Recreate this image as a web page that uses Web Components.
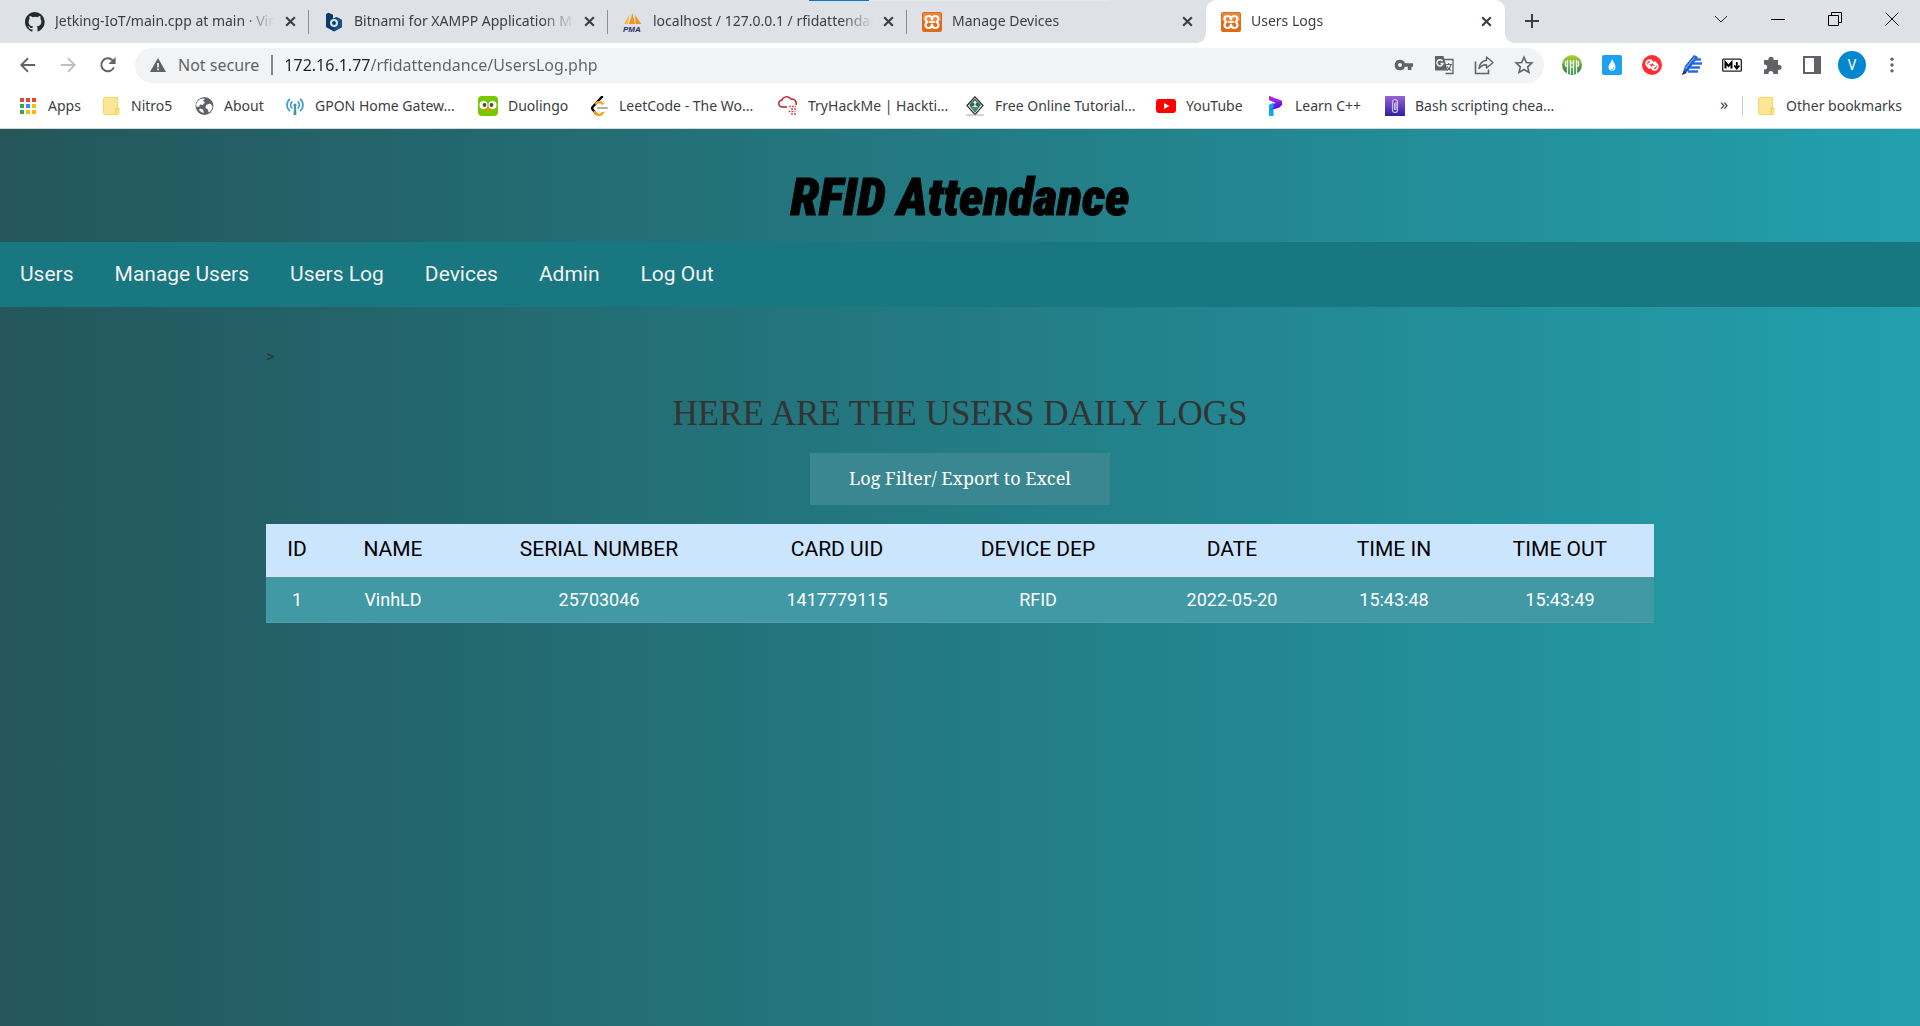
<!DOCTYPE html>
<html lang="en">
<head>
<meta charset="utf-8">
<title>Users Logs</title>
<style>
html,body{height:100%}
body{margin:0;font-family:"Noto Sans","Open Sans",sans-serif;font-size:14px;color:#3c4043;display:flex;flex-direction:column}
browser-window{flex:1}
</style>
</head>
<body>
<browser-window>
  <tab-strip slot="tabs">
    <browser-tab icon="github">Jetking-IoT/main.cpp at main · VinhLD</browser-tab>
    <browser-tab icon="bitnami">Bitnami for XAMPP Application Manager</browser-tab>
    <browser-tab icon="pma">localhost / 127.0.0.1 / rfidattendance</browser-tab>
    <browser-tab icon="xampp">Manage Devices</browser-tab>
    <browser-tab icon="xampp" active>Users Logs</browser-tab>
  </tab-strip>
  <address-bar slot="toolbar"></address-bar>
  <bookmark-bar slot="bookmarks">
    <bookmark-link icon="apps">Apps</bookmark-link>
    <bookmark-link icon="folder">Nitro5</bookmark-link>
    <bookmark-link icon="globe">About</bookmark-link>
    <bookmark-link icon="gpon">GPON Home Gatew...</bookmark-link>
    <bookmark-link icon="duo">Duolingo</bookmark-link>
    <bookmark-link icon="leet">LeetCode - The Wo...</bookmark-link>
    <bookmark-link icon="thm">TryHackMe | Hackti...</bookmark-link>
    <bookmark-link icon="tutorial">Free Online Tutorial...</bookmark-link>
    <bookmark-link icon="youtube">YouTube</bookmark-link>
    <bookmark-link icon="learn">Learn C++</bookmark-link>
    <bookmark-link icon="bash">Bash scripting chea...</bookmark-link>
    <bookmark-link slot="other" icon="folder">Other bookmarks</bookmark-link>
  </bookmark-bar>
  <attendance-page>
    <site-header slot="header">RFID Attendance</site-header>
    <site-nav slot="header"></site-nav>
    <user-logs></user-logs>
  </attendance-page>
</browser-window>

<script>
const ICONS = {
github:['0 0 16 16','<path fill="#24292f" d="M8 0C3.6 0 0 3.6 0 8c0 3.5 2.3 6.5 5.5 7.6.4.1.5-.2.5-.4v-1.400c-2.200.5-2.700-1-2.700-1-.4-.9-.9-1.200-.9-1.200-.7-.5.1-.5.1-.5.8.1 1.200.8 1.200.8.7 1.300 1.900.9 2.300.7.1-.5.3-.9.5-1.100-1.800-.2-3.600-.9-3.600-4 0-.9.3-1.600.8-2.100-.1-.2-.4-1 .1-2.100 0 0 .7-.2 2.200.8a7.500 7.500 0 0 1 4 0c1.500-1 2.200-.8 2.200-.8.4 1.100.2 1.900.1 2.100.5.600.8 1.300.8 2.100 0 3.100-1.900 3.700-3.700 3.900.3.300.6.800.6 1.500v2.200c0 .2.100.5.500.4A8 8 0 0 0 8 0z"/>'],
bitnami:['0 0 20 20','<path fill="#0b3a66" d="M4.500.8l4.500 2v4l3-1.500 6 2.700v7L10 19.500 2 15V2z"/><path fill="#15508c" d="M9 7l4-2 5 3v7l-8 4.500z"/><circle cx="10" cy="11" r="4" fill="#dee1e6"/><circle cx="10" cy="11" r="1.900" fill="#0b3a66"/>'],
pma:['0 0 20 20','<path fill="#f7941d" d="M6 12L9.500 1 12 12zM12.500 12L12 3l6.500 9z"/><path fill="#fbb450" d="M1 12L6 3 5 12z"/><text x="0" y="19.500" font-family="Liberation Sans" font-size="8" font-weight="bold" font-style="italic" fill="#2b2e63">PMA</text>'],
xampp:['0 0 20 20','<rect width="20" height="20" rx="2" fill="#e06a17"/><rect x="1" y="1" width="18" height="8" rx="1" fill="#f08538"/><g fill="none" stroke="#fff" stroke-width="2.200" stroke-linecap="round" stroke-linejoin="round"><path d="M10 7.500C10 4.500 8.500 4 6.500 4S3.500 5.500 3.500 7 4.500 9.500 5.500 10C4.300 10.500 3.500 11.500 3.500 13s1.200 3 3 3S10 15 10 12.500C10 15 11.700 16 13.500 16s3-1.500 3-3-.8-2.500-2-3c1.200-.5 2-1.500 2-3s-1.200-3-3-3S10 4.500 10 7.500z"/><path d="M8 10h4"/></g>'],
close:['0 0 12 12','<path d="M2 2l8 8M10 2l-8 8" stroke="#3c4043" stroke-width="2"/>'],
plus:['0 0 16 16','<path d="M8 1v14M1 8h14" stroke="#3c4043" stroke-width="2"/>'],
chev:['0 0 14 14','<path d="M1 4l6 6 6-6" fill="none" stroke="#222" stroke-width="1"/>'],
min:['0 0 14 14','<path d="M0 7.500h14" stroke="#000"/>'],
restore:['0 0 14 14','<path d="M.5 3.500h10v10h-10zM3.500 3.500v-3h10v10h-3" fill="none" stroke="#000"/>'],
wclose:['0 0 14 14','<path d="M.5.5l13 13M13.500.5l-13 13" stroke="#111"/>'],
back:['0 0 20 20','<path d="M18 10H3M10 2.500L2.500 10l7.500 7.500" fill="none" stroke="#5f6368" stroke-width="2"/>'],
fwd:['0 0 20 20','<path d="M2 10h15M10 2.500l7.500 7.500-7.500 7.500" fill="none" stroke="#bdc1c6" stroke-width="2"/>'],
reload:['0 0 20 20','<path d="M16.500 12.500A7.200 7.200 0 1 1 15 4.800L17 7" fill="none" stroke="#5f6368" stroke-width="2.200"/><path d="M18.500 1v8h-8z" fill="#5f6368"/>'],
warn:['0 0 16 16','<path d="M8 1l8 14H0z" fill="#5f6368"/><path d="M7.200 6h1.600v4.500H7.200zM7.200 11.600h1.600v1.600H7.200z" fill="#fff"/>'],
key:['0 0 20 20','<path fill="#5f6368" fill-rule="evenodd" d="M6 4.700a5.300 5.300 0 0 1 5 3.600h8v3.500h-1.600V15h-3.600v-3.200H11A5.300 5.300 0 1 1 6 4.700zM6 8a2 2 0 1 0 0 4 2 2 0 0 0 0-4z"/>'],
translate:['0 0 20 20','<path d="M10 4.500h9v14h-7.500" fill="none" stroke="#5f6368" stroke-width="1.300"/><path d="M1 1h8.500l4 14.500H1z" fill="#5f6368"/><path d="M8.500 6A3.100 3.100 0 1 0 9 8.500H6.500" fill="none" stroke="#fff" stroke-width="1.400"/><path d="M11.500 9.500H18M14.700 8v1.500M17 9.500c-.5 2.500-2 4.500-4 6M13 11.500c1 1.800 2 3 4 4" fill="none" stroke="#5f6368" stroke-width="1.200"/>'],
share:['0 0 20 20','<path d="M1.500 6.500v12h13v-4" fill="none" stroke="#5f6368" stroke-width="1.600"/><path d="M12.500 2l6.500 5.500-6.500 5.500v-3.300c-3.500-.2-5.500 1-7.500 3.800.5-4.500 3-7.500 7.500-8.200z" fill="none" stroke="#5f6368" stroke-width="1.400" stroke-linejoin="round"/>'],
star:['0 0 20 20','<path d="M10 2.300l2.300 5.200 5.600.5-4.200 3.800 1.200 5.600L10 14.500l-4.900 2.900 1.200-5.600L2.100 8l5.600-.5z" fill="none" stroke="#5f6368" stroke-width="1.600"/>'],
forks:['0 0 20 20','<defs><linearGradient id="g" x2="0" y2="1"><stop offset="0" stop-color="#b5d334"/><stop offset="1" stop-color="#0b7a3b"/></linearGradient></defs><circle cx="10" cy="10" r="10" fill="url(#g)"/><path d="M5.500 5v14M8.500 5v14.500M11.500 5v14.500M14.500 5v14" fill="none" stroke="#fff" stroke-width="1.400"/><path d="M3.500 6v5h2M16.500 6v5h-2M8.500 8h3M8.500 12h3" fill="none" stroke="#fff" stroke-width="1.200"/>'],
drop:['0 0 20 20','<rect width="20" height="20" rx="2" fill="#1da1f2"/><path d="M10 4c1 3 3.500 5 3.500 8a3.500 3.700 0 0 1-7 0C6.500 9.500 9 8 10 4z" fill="#fff"/><path d="M9 14.500c2 .3 3-.8 3-2.500" fill="none" stroke="#1da1f2" stroke-width=".8"/>'],
redsync:['0 0 20 20','<circle cx="10" cy="10" r="10" fill="#ff2d34"/><path d="M7.500 13.500L5 10.500a3.300 3.300 0 0 1 4-5l5 5M12.500 6.500l2.500 3a3.300 3.300 0 0 1-4 5l-5-5" fill="none" stroke="#fff" stroke-width="1.900"/><path d="M10 4.200v5H5.500zM10 15.800v-5h4.500z" fill="#fff"/>'],
pencil:['0 0 20 20','<path d="M0 20L3 11 12 0l4 2L6 16z" fill="#1c58c7"/><path d="M3 14L13 2" stroke="#5aa0f2" stroke-width="1.500"/><path d="M12 4.500h7M11 8.500h9M8 12.500h10M6 16.500h10" stroke="#2a6de0" stroke-width="2.400"/><path d="M0 20l2-4 3 2z" fill="#12326e"/>'],
md:['0 0 20 20','<rect x=".7" y="4.200" width="18.600" height="12" rx="1" fill="#fff" stroke="#222" stroke-width="1.300"/><path d="M3.500 13.500v-6l3 3.500 3-3.500v6" fill="none" stroke="#000" stroke-width="2"/><path d="M14.800 7v5M12.300 10.500l2.500 3 2.500-3" fill="none" stroke="#000" stroke-width="1.800"/>'],
puzzle:['0 0 20 20','<path fill="#5f6368" d="M2 5h4.500a2.600 2.600 0 1 1 5 0H16v5a2.600 2.600 0 1 1 0 4.800V19h-4.800a2.400 2.400 0 1 0-4.600 0H2v-4.500a2.500 2.500 0 1 0 0-4.800z"/>'],
panel:['0 0 20 20','<rect x="2" y="2" width="16" height="16" fill="none" stroke="#5f6368" stroke-width="2"/><path d="M12 2h6v16h-6z" fill="#5f6368"/>'],
dots:['0 0 20 20','<g fill="#5f6368"><circle cx="10" cy="3.500" r="1.900"/><circle cx="10" cy="10" r="1.900"/><circle cx="10" cy="16.500" r="1.900"/></g>'],
apps:['0 0 20 20','<path fill="#ea4335" d="M2 2h4v4H2zM8 2h4v4H8zM14 2h4v4h-4z"/><path fill="#34a853" d="M2 8h4v4H2zM2 14h4v4H2z"/><path fill="#4285f4" d="M8 8h4v4H8z"/><path fill="#fbbc04" d="M14 8h4v4h-4zM8 14h4v4H8zM14 14h4v4h-4z"/>'],
folder:['0 0 20 20','<path d="M3.500 1.500h13v11h1.500v4.500a1.500 1.500 0 0 1-1.500 1.500h-13a1.500 1.500 0 0 1-1-1.500V2.500z" fill="#ffe694" stroke="#f5d565"/><path d="M15 18v-4.500a1 1 0 0 1 3 0" fill="none" stroke="#e8c44f"/>'],
globe:['0 0 20 20','<circle cx="10.500" cy="10" r="9" fill="#5f6368"/><path d="M4 5c2-2.500 5-3 7-2.300L9 5l2 1.500L8.500 9 6 8.500 5 11l-2.800-.5C2 8.500 2.800 6.500 4 5zM12 9l4-1.500 2.500 2.500c0 3-1.700 5.500-4 6.500l-.5-3-2.500-1.500zM6 12.500l3 1 1 3.500c-2-.3-4-1.500-5-3z" fill="#fff"/>'],
gpon:['0 0 20 20','<g fill="none" stroke="#3da2cf" stroke-width="1.700"><path d="M5 3C1 6 1 12 5 15M7.300 5.500c-2.300 2-2.300 5 0 7M15 3c4 3 4 9 0 12M12.700 5.500c2.300 2 2.300 5 0 7"/></g><path d="M10 7.500a1.700 1.700 0 0 1 1 3L11.500 19h-3L9 10.500a1.700 1.700 0 0 1 1-3z" fill="#4f8fae"/>'],
duo:['0 0 20 20','<rect width="20" height="20" rx="4" fill="#78c800"/><circle cx="5.500" cy="9" r="4" fill="#fff"/><circle cx="14.500" cy="9" r="4" fill="#fff"/><circle cx="6.500" cy="9" r="1.900" fill="#4b4b4b"/><circle cx="13.500" cy="9" r="1.900" fill="#4b4b4b"/><path d="M7.500 12.500L10 11l2.500 1.500L10 16z" fill="#ff8a00"/>'],
leet:['0 0 20 20','<path d="M13 .8L4 10.500c-1 1-1 2.500 0 3.500l3.500 4" fill="none" stroke="#000" stroke-width="2.400" stroke-linecap="round"/><path d="M7 7.500c2-2 4.500-2 6.500.2M5.500 16l3 2.500c2 .8 4 .2 5.500-1.800" fill="none" stroke="#ffa116" stroke-width="2.400" stroke-linecap="round"/><path d="M9 12h9" stroke="#b3b3b3" stroke-width="2.200" stroke-linecap="round"/>'],
thm:['0 0 20 20','<path d="M9 11H4.500a3.500 3.500 0 0 1-.5-7c1-3.500 6.500-4.500 9-1 3.500-.5 6 2.500 5 6" fill="none" stroke="#c11d2b" stroke-width="1.500"/><g fill="none" stroke="#c4545c" stroke-width="1.500" stroke-dasharray="2 1"><path d="M11 10.500h7M13 13h6M10.500 15.500h7M13 18h6"/></g>'],
tutorial:['0 0 20 20','<path d="M10 .8l8 8.800-8 9-8-9z" fill="#eef3ee" stroke="#222" stroke-width="1.200"/><path d="M10 3.500L5 9l5 6.500L15 9z" fill="none" stroke="#466" stroke-width="1.400"/><circle cx="7.500" cy="8.500" r="2" fill="#2f6b4b"/><circle cx="12.500" cy="8.500" r="2" fill="#2f6b4b"/><path d="M5.500 11h9L10 15.500z" fill="#4b8c68"/><path d="M1 19h18" stroke="#aaa"/>'],
youtube:['0 0 20 20','<rect y="3" width="20" height="14" rx="3" fill="#f00"/><path d="M8 7l5.500 3L8 13z" fill="#fff"/>'],
learn:['0 0 20 20','<path d="M4 0l13 5v4l-4 3-9 2V9l7-2-7-3z" fill="#6a1be0"/><path d="M4 0l13 5-3 1L4 4z" fill="#b41cf0"/><path d="M4 9l4.500-2.500V20H4z" fill="#0da7ff"/><path d="M4 14l13-6-2.500 3.500z" fill="#4a1ad8"/>'],
bash:['0 0 20 20','<defs><linearGradient id="b" x2="0" y2="1"><stop offset="0" stop-color="#9a63d4"/><stop offset="1" stop-color="#2d1fa0"/></linearGradient></defs><rect width="20" height="20" fill="url(#b)"/><path d="M7.500 6a2.500 2.500 0 0 1 5 0v8a2.500 2.500 0 0 1-5 0zM9.500 7v6a.8.8 0 0 0 1.500 0V6" fill="none" stroke="#c9bdf0" stroke-width="1.200"/>']
};

class Base extends HTMLElement {
  constructor() {
    super();
    this.attachShadow({mode: 'open'});
  }
  connectedCallback() { this.shadowRoot.innerHTML = this.view(); }
}
const RESET = `:host,*{box-sizing:border-box}button,input{font:inherit;color:inherit;border:0;background:none;padding:0;margin:0}a{color:inherit;text-decoration:none}button{display:grid;place-items:center}`;

customElements.define('app-icon', class extends Base {
  view() {
    const [box, body] = ICONS[this.getAttribute('name')];
    const size = this.getAttribute('size') || 20;
    return `<style>:host{display:block;flex:none;line-height:0}</style><svg aria-hidden="true" width="${size}" height="${size}" viewBox="${box}">${body}</svg>`;
  }
});

customElements.define('browser-window', class extends Base {
  view() { return `<style>
    :host{display:flex;flex-direction:column}
    ::slotted(attendance-page){flex:1}
    </style><slot name="tabs"></slot><slot name="toolbar"></slot><slot name="bookmarks"></slot><slot></slot>`; }
});

customElements.define('tab-strip', class extends Base {
  view() { return `<style>${RESET}
    :host{display:flex;position:relative;height:43px;background:#dee1e6;padding-left:10px}
    .new{width:54px;height:42px;flex:none}
    .win{display:flex;margin-left:auto}
    .win button{width:57px;height:38px}
    .load{position:absolute;top:0;left:809px;width:300px;height:1px;background:linear-gradient(to right,#0078d7 60px,#e6e6e6 60px)}
    </style><slot></slot><button class="new" aria-label="New tab"><app-icon name="plus" size="16"></app-icon></button>
    <div class="win">${['chev','min','restore','wclose'].map(n => `<button aria-label="${n}"><app-icon name="${n}" size="14"></app-icon></button>`).join('')}</div>
    <div class="load"></div>`; }
});

customElements.define('browser-tab', class extends Base {
  view() { return `<style>${RESET}
    :host{display:flex;align-items:center;flex:0 1 299px;min-width:0;height:43px;padding:0 9px 0 15px;position:relative}
    :host(:not([active]))::after{content:"";position:absolute;right:0;top:10px;height:24px;width:1px;background:#8a8d91}
    :host(:nth-last-child(2))::after{display:none}
    :host([active]){background:#fff;border-radius:10px 10px 0 0}
    :host([active])::before,:host([active])::after{content:"";display:block;position:absolute;bottom:0;width:10px;height:10px}
    :host([active])::before{left:-10px;background:radial-gradient(circle at 0 0,transparent 10px,#fff 10px)}
    :host([active])::after{right:-10px;background:radial-gradient(circle at 100% 0,transparent 10px,#fff 10px)}
    .tab{display:flex;align-items:center;justify-content:start;gap:10px;flex:1;min-width:0;height:100%;text-align:left}
    .t{flex:1;min-width:0;overflow:hidden;white-space:nowrap;line-height:20px;padding-bottom:2px;mask-image:linear-gradient(to left,transparent,#000 32px)}
    .x{width:20px;height:42px;margin-left:5px;flex:none}
    </style><button class="tab" role="tab"><app-icon name="${this.getAttribute('icon')}"></app-icon><span class="t"><slot></slot></span></button><button class="x" aria-label="Close tab"><app-icon name="close" size="13"></app-icon></button>`; }
});

customElements.define('address-bar', class extends Base {
  view() {
    const b = (n, l, s = 20) => `<button type="button" aria-label="${l}"><app-icon name="${n}" size="${s}"></app-icon></button>`;
    return `<style>${RESET}
    :host{display:flex;align-items:center;height:44px;background:#fff;padding:0 8px;font-size:16px}
    button{width:40px;height:40px;flex:none}
    form{display:flex;align-items:center;flex:1;height:35px;margin:0 8px 0 7px;padding-left:15px;border-radius:18px;background:#f1f3f4;color:#5f6368}
    form button:first-of-type{margin-left:8px}
    label{display:flex;align-items:center;gap:12px;line-height:22px;white-space:nowrap}
    label::after{content:"";width:2px;height:20px;background:#80868b}
    input{flex:1;min-width:0;height:24px;margin-left:11px;outline:0;background:linear-gradient(to right,#202124 86px,#5f6368 86px);-webkit-background-clip:text;background-clip:text;-webkit-text-fill-color:transparent}
    .me span{display:grid;place-items:center;width:28px;height:28px;border-radius:50%;background:#0288d1;color:#fff;font:14px/28px "Roboto",sans-serif}
    </style>${b('back','Back',18)}${b('fwd','Forward',18)}${b('reload','Reload',18)}
    <form><label for="url"><app-icon name="warn" size="16"></app-icon>Not secure</label><input id="url" value="172.16.1.77/rfidattendance/UsersLog.php">
    ${b('key','Passwords')}${b('translate','Translate')}${b('share','Share')}${b('star','Bookmark')}</form>
    ${b('forks','Extension')}${b('drop','Extension')}${b('redsync','Extension')}${b('pencil','Extension')}${b('md','Extension')}${b('puzzle','Extensions')}${b('panel','Side panel')}
    <button class="me" aria-label="Profile"><span>V</span></button>${b('dots','Menu',18)}`;
  }
});

customElements.define('bookmark-bar', class extends Base {
  view() { return `<style>${RESET}
    :host{display:flex;align-items:center;height:42px;background:#fff;border-bottom:1px solid #d5d7da;padding:0 18px 4px}
    nav{display:grid;flex:1;min-width:0;overflow:hidden;grid-template-columns:83px 93px 91px 193px 111px 189px 187px 191px 109px 120px 190px}
    .more{width:24px;font-size:16px;line-height:20px;padding-bottom:4px}
    .other{border-left:1px solid #c6c9cd;height:20px;margin-left:6px;padding-left:13px;display:flex;align-items:center}
    </style><nav aria-label="Bookmarks"><slot></slot></nav><button class="more">»</button><div class="other"><slot name="other"></slot></div>`; }
});

customElements.define('bookmark-link', class extends Base {
  view() { return `<style>${RESET}:host{display:block}a{display:flex;align-items:center;gap:10px;line-height:20px;white-space:nowrap}</style>
    <a href="#"><app-icon name="${this.getAttribute('icon')}"></app-icon><span><slot></slot></span></a>`; }
});

customElements.define('attendance-page', class extends Base {
  view() { return `<style>
    :host{display:block;background:linear-gradient(to right,#24565b,#22a0ad);font-family:Roboto,sans-serif;color:#333}
    </style><header><slot name="header"></slot></header><main><slot></slot></main>`; }
});

customElements.define('site-header', class extends Base {
  view() { return `<style>
    :host{display:block;padding:39px 0 14px}
    h1{margin:0;text-align:center;color:#000;font:italic 900 52px/60px Impact,"Roboto Condensed",sans-serif;-webkit-text-stroke:1px #000}
    </style><h1><slot></slot></h1>`; }
});

customElements.define('site-nav', class extends Base {
  view() { return `<style>${RESET}
    :host{display:block;background:#187780}
    nav{display:flex;gap:1px}
    a{padding:20px;font-size:21px;line-height:25px;color:#f2f2f2}
    </style><nav>${['Users','Manage Users','Users Log','Devices','Admin','Log Out'].map(t => `<a href="#">${t}</a>`).join('')}</nav>`; }
});

customElements.define('user-logs', class extends Base {
  view() {
    const cols = [['ID','1',62],['NAME','VinhLD',130],['SERIAL NUMBER','25703046',282],['CARD UID','1417779115',194],['DEVICE DEP','RFID',208],['DATE','2022-05-20',180],['TIME IN','15:43:48',144],['TIME OUT','15:43:49',188]];
    return `<style>${RESET}
    :host{display:flex;flex-direction:column;align-items:center;padding:40px 0;width:1388px;max-width:100%;margin:0 auto}
    p{margin:0;align-self:start;font-size:16px;line-height:20px}
    h2{margin:26px 0 18px;font:400 35px/42px "Liberation Serif","Times New Roman",serif;text-align:center}
    button{width:300px;height:52px;padding-bottom:2px;background:#3b8791;color:#fff;font:18px/24px "Noto Serif",Georgia,serif}
    table{margin-top:19px;width:100%;table-layout:fixed;border-collapse:collapse;text-align:center}
    th{height:52px;padding:0 0 2px;font-size:21px;font-weight:400;color:#000;background:#cce5ff;border-bottom:2px solid #dee2e6}
    td{height:46px;padding:0;font-size:18px;color:#fff;background:#4099a4;border-bottom:1px solid #539fa9}
    </style><p>&gt;</p><h2>HERE ARE THE USERS DAILY LOGS</h2>
    <button>Log Filter/ Export to Excel</button>
    <table><colgroup>${cols.map(c => `<col style="width:${c[2]}px">`).join('')}</colgroup>
    <thead><tr>${cols.map(c => `<th scope="col">${c[0]}</th>`).join('')}</tr></thead>
    <tbody><tr>${cols.map(c => `<td>${c[1]}</td>`).join('')}</tr></tbody></table>`;
  }
});
</script>
</body>
</html>
